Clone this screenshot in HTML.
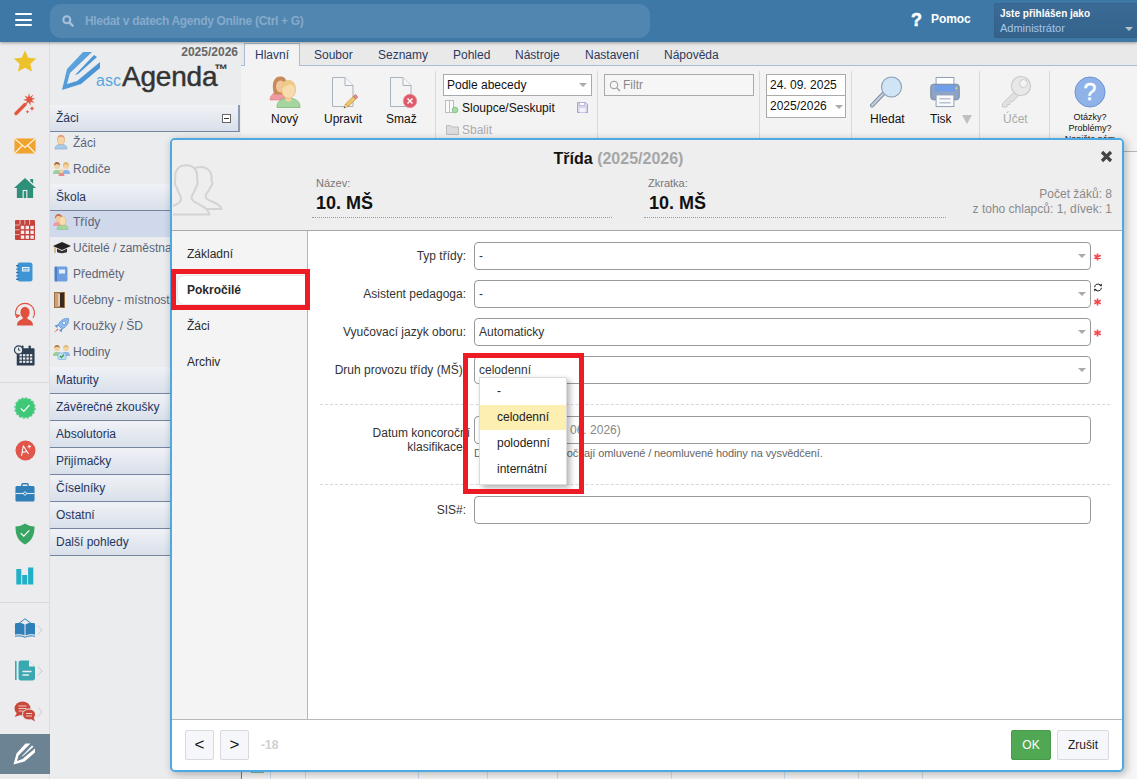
<!DOCTYPE html>
<html lang="cs">
<head>
<meta charset="utf-8">
<title>ascAgenda</title>
<style>
*{box-sizing:border-box;margin:0;padding:0}
html,body{width:1137px;height:779px;overflow:hidden;background:#fff;font-family:"Liberation Sans",sans-serif;font-size:12px;color:#222}
.abs{position:absolute}
#topbar{position:absolute;left:0;top:0;width:1137px;height:42px;background:#3e78a7;box-shadow:0 1px 3px rgba(0,0,0,.35);z-index:5}
#search{position:absolute;left:50px;top:4px;width:600px;height:34px;border-radius:11px;background:#5186b1}
#search span{position:absolute;left:35px;top:10px;font-size:12px;font-weight:bold;color:#86aaca;letter-spacing:-0.32px;white-space:nowrap}
#burger i{position:absolute;left:15px;width:17px;height:2px;background:#fff;border-radius:1px}
#help{position:absolute;left:911px;top:8px;color:#fff;font-weight:bold;white-space:nowrap}
#user{position:absolute;left:994px;top:3px;width:146px;height:35px;background:linear-gradient(#3a6b96,#34628b);border-radius:3px;box-shadow:inset 0 0 1px rgba(0,0,0,.35)}
#rail{position:absolute;left:0;top:42px;width:50px;height:737px;background:#ececee;border-right:1px solid #dcdcde}
#side{position:absolute;left:50px;top:42px;width:191px;height:737px;background:#ebecee}
.sh{position:absolute;left:0px;width:190px;height:27px;background:linear-gradient(#f0f2f6,#d9e0ea);border-bottom:1px solid #76859f;color:#25355f;font-size:12px;line-height:27px;padding-left:6px}
.si{position:absolute;left:0px;width:190px;height:26px;color:#5b6478;font-size:12px;line-height:23px;padding-left:23px;white-space:nowrap}
.si.sel{background:#d0d8ec}
#main{position:absolute;left:241px;top:42px;width:896px;height:737px;background:#f6f6f6}
#tabs{position:absolute;left:0;top:0;width:896px;height:24px;background:#e9e9e9;border-bottom:1px solid #a8bdd3}
.tab{position:absolute;top:1px;height:24px;line-height:25px;font-size:12px;color:#2b3a5e;white-space:nowrap}
#ribbon{position:absolute;left:0;top:24px;width:896px;height:86px;background:#f3f3f3;border-bottom:1px solid #b4b4b4}
.rb{position:absolute;font-size:12px;color:#111;white-space:nowrap}
.vsep{position:absolute;top:5px;width:1px;height:80px;background:#d9d9d9}
#dlg{position:absolute;left:170px;top:138px;width:954px;height:634px;border:2px solid #4ea9e2;border-radius:5px;background:#fff;z-index:10;box-shadow:2px 2px 9px rgba(0,0,0,.28);overflow:hidden}
#dh{position:absolute;left:0;top:0;width:949px;height:91px;background:#eeeeee;border-bottom:1px solid #a9a9a9}
#dn{position:absolute;left:0;top:91px;width:135px;height:488px;background:#f4f4f4;border-right:1px solid #b5b5b5}
#df{position:absolute;left:0;top:579px;width:949px;height:51px;background:#fff;border-top:1px solid #b9b9b9}
.nv{position:absolute;left:14px;font-size:12px;color:#2a2a2a}
.lb{position:absolute;width:200px;text-align:right;font-size:12px;color:#333;white-space:nowrap}
.sel2{position:absolute;left:301px;width:617px;height:28px;border:1px solid #999;border-radius:4px;background:#fff;font-size:12px;color:#333;line-height:26px;padding-left:4px}
.sel2:after{content:"";position:absolute;right:4px;top:11px;border:4px solid transparent;border-top:4px solid #aaa;border-bottom:0}
.ast{position:absolute;left:920px;font-size:17px;color:#f44;font-weight:bold;line-height:10px}
.dash{position:absolute;left:147px;width:790px;height:0;border-top:1px dashed #d8d8d8}
.red{position:absolute;border:5px solid #ed1c24;z-index:30}
.btn{position:absolute;height:30px;border-radius:2px;font-size:12px;text-align:center;line-height:29px}
</style>
</head>
<body>
<div id="topbar">
  <div id="burger"><i style="top:13px"></i><i style="top:19px"></i><i style="top:24px"></i></div>
  <div id="search">
    <svg class="abs" style="left:12px;top:11px" width="12" height="12" viewBox="0 0 12 12"><circle cx="4.800" cy="4.800" r="3.500" fill="none" stroke="#a5c0d8" stroke-width="2.100"/><path d="M7.600 7.600L10.600 10.600" stroke="#a5c0d8" stroke-width="2.500" stroke-linecap="round"/></svg>
    <span>Hledat v datech Agendy Online (Ctrl + G)</span>
  </div>
  <div id="help"><span style="font-size:18px;position:relative;top:2px;-webkit-text-stroke:.5px #fff">?</span><span style="font-size:12px;margin-left:9px;letter-spacing:-0.1px;position:relative;top:-1px">Pomoc</span></div>
  <div id="user">
    <div class="abs" style="left:6px;top:5px;font-size:10px;font-weight:bold;color:#fff;white-space:nowrap">Jste přihlášen jako</div>
    <div class="abs" style="left:6px;top:19px;font-size:11px;color:#a6c6e6;white-space:nowrap">Administrátor</div>
    <div class="abs" style="left:131px;top:24px;border:4px solid transparent;border-top:4px solid #b5c3d0;border-bottom:0"></div>
  </div>
</div>
<div id="rail"><!-- star -->
<svg class="abs" style="left:13px;top:8px" width="24" height="22" viewBox="0 0 24 22"><path d="M12 0.500L15.300 7.800L23.200 8.600L17.300 13.900L19 21.600L12 17.700L5 21.600L6.700 13.900L0.800 8.600L8.700 7.800Z" fill="#ecc12a"/></svg>
<!-- wand -->
<svg class="abs" style="left:13px;top:51px" width="24" height="23" viewBox="0 0 24 23"><path d="M3 20.500L12 11.500" stroke="#e25541" stroke-width="3.400" stroke-linecap="round"/><path d="M16 0l1 4 3.500-2.500-2 3.500 4 .5-3.700 1.600 2.700 3-3.800-1.300-.3 4-1.700-3.600-3 2.500 1.300-3.800-3.800-.8 3.700-1.400-2.400-3.200 3.500 1.800z" fill="#e25541"/><path d="M19 13l.8 1.700 1.700.8-1.700.8-.8 1.700-.8-1.700-1.700-.8 1.700-.8zM14.500 17l.6 1.200 1.200.6-1.200.6-.6 1.200-.6-1.200-1.200-.6 1.200-.6z" fill="#e25541"/></svg>
<!-- mail -->
<svg class="abs" style="left:14px;top:96px" width="22" height="16" viewBox="0 0 24 17" preserveAspectRatio="none"><rect x="0.500" y="0.500" width="23" height="16" fill="#f0a32d"/><path d="M0.500 0.500L12 10L23.500 0.500" fill="none" stroke="#fdf3df" stroke-width="1.300"/><path d="M0.500 16.500L9 8M23.500 16.500L15 8" stroke="#fdf3df" stroke-width="1.300"/></svg>
<!-- home -->
<svg class="abs" style="left:14px;top:135px" width="22" height="22" viewBox="0 0 23 23"><path d="M11.500 1L23 11.500H20V22H3V11.500H0Z" fill="#2e9079"/><path d="M17 2h3v5l-3-2.700z" fill="#2e9079"/><rect x="9" y="13.500" width="5" height="8.500" fill="#ececee"/><rect x="10.200" y="14.700" width="2.600" height="7.300" fill="#2e9079"/></svg>
<!-- grid calendar -->
<svg class="abs" style="left:15px;top:178px" width="20" height="20" viewBox="0 0 20 20"><rect width="20" height="20" rx="1" fill="#c4433d"/><g fill="#f7ebea"><rect x="5.8" y="5.8" width="3.400" height="3.400"/><rect x="5.8" y="10.6" width="3.400" height="3.400"/><rect x="5.8" y="15.4" width="3.400" height="3.400"/><rect x="10.6" y="5.8" width="3.400" height="3.400"/><rect x="10.6" y="10.6" width="3.400" height="3.400"/><rect x="10.6" y="15.4" width="3.400" height="3.400"/><rect x="15.4" y="5.8" width="3.400" height="3.400"/><rect x="15.4" y="10.6" width="3.400" height="3.400"/><rect x="15.4" y="15.4" width="3.400" height="3.400"/></g><g fill="#ecc5c2"><rect x="4.6" y="0" width=".9" height="4.600"/><rect x="0" y="4.6" width="4.600" height=".9"/><rect x="9.4" y="0" width=".9" height="4.600"/><rect x="0" y="9.4" width="4.600" height=".9"/><rect x="14.2" y="0" width=".9" height="4.600"/><rect x="0" y="14.2" width="4.600" height=".9"/></g></svg>
<!-- notebook -->
<svg class="abs" style="left:16px;top:220px" width="17" height="20" viewBox="0 0 17 20"><rect x="1.500" y="0.500" width="15" height="19" rx="2.500" fill="#3e95d6"/><rect x="6" y="5" width="7.500" height="4.500" fill="#e9f3fb"/><path d="M7 6.500h5.500M7 8h5.500" stroke="#3a8fd0" stroke-width=".7"/><g fill="#2c6fa8"><rect x="0" y="3" width="3" height="1.400" rx=".7"/><rect x="0" y="6.400" width="3" height="1.400" rx=".7"/><rect x="0" y="9.800" width="3" height="1.400" rx=".7"/><rect x="0" y="13.200" width="3" height="1.400" rx=".7"/><rect x="0" y="16.600" width="3" height="1.400" rx=".7"/></g></svg>
<!-- user refresh -->
<svg class="abs" style="left:14px;top:260px" width="22" height="24" viewBox="0 0 22 24"><path d="M3 16A9.500 9.500 0 1 1 19 16" fill="none" stroke="#e0503f" stroke-width="1.100"/><path d="M1.500 12l2 4 3-3z" fill="#e0503f"/><path d="M3 23.500c0-4 2.500-5.500 5.500-6.500v-1.500h5V17c3 1 5.500 2.500 5.500 6.500z" fill="#e0503f"/><ellipse cx="11" cy="10.500" rx="4.600" ry="5.800" fill="#e0503f"/></svg>
<!-- calendar clock -->
<svg class="abs" style="left:14px;top:303px" width="21" height="21" viewBox="0 0 23 23"><rect x="3" y="3.500" width="19.500" height="19" rx="1" fill="#2c3e50"/><rect x="8" y="0.500" width="2.400" height="5" rx="1" fill="#2c3e50"/><rect x="16" y="0.500" width="2.400" height="5" rx="1" fill="#2c3e50"/><g fill="#ececee"><rect x="6" y="10" width="2.600" height="2.400"/><rect x="9.800" y="10" width="2.600" height="2.400"/><rect x="13.600" y="10" width="2.600" height="2.400"/><rect x="17.400" y="10" width="2.600" height="2.400"/><rect x="6" y="13.600" width="2.600" height="2.400"/><rect x="9.800" y="13.600" width="2.600" height="2.400"/><rect x="13.600" y="13.600" width="2.600" height="2.400"/><rect x="17.400" y="13.600" width="2.600" height="2.400"/><rect x="6" y="17.200" width="2.600" height="2.400"/><rect x="9.800" y="17.200" width="2.600" height="2.400"/><rect x="13.600" y="17.200" width="2.600" height="2.400"/><rect x="17.400" y="17.200" width="2.600" height="2.400"/></g><circle cx="5" cy="5.500" r="4.500" fill="#ececee" stroke="#2c3e50" stroke-width="1.200"/><path d="M5 3v2.700h2" stroke="#2c3e50" stroke-width="1" fill="none"/></svg>
<div class="abs" style="left:0;top:340px;width:49px;height:1px;background:#d8d8da"></div>
<!-- check badge -->
<svg class="abs" style="left:14px;top:355px" width="22" height="22" viewBox="0 0 21 21"><circle cx="10.500" cy="10.500" r="9.300" fill="#3fc878"/><circle cx="10.500" cy="10.500" r="9.700" fill="none" stroke="#3fc878" stroke-width="1" stroke-dasharray="2.200 1.600"/><path d="M6.500 10.800l2.800 2.900L14.800 7.800" stroke="#fff" stroke-width="1.200" fill="none"/></svg>
<!-- A+ -->
<svg class="abs" style="left:15px;top:398px" width="21" height="21" viewBox="0 0 21 21"><circle cx="10.500" cy="10.500" r="10" fill="#e0564a"/><g transform="rotate(-12 10.500 10.500)"><path d="M5.500 15L9.300 5.500L12.800 14.500M6.500 11.800h5.500" stroke="#fff" stroke-width="1" fill="none" stroke-linejoin="round"/><path d="M13.200 7.500h3.600M15 5.700v3.600" stroke="#fff" stroke-width="1"/></g></svg>
<!-- briefcase -->
<svg class="abs" style="left:15px;top:441px" width="20" height="19" viewBox="0 0 22 19" preserveAspectRatio="none"><path d="M7.500 3.500V1.800c0-.6.400-1 1-1h5c.6 0 1 .4 1 1v1.700" fill="none" stroke="#2f7fb8" stroke-width="1.500"/><rect x="0.500" y="3" width="21" height="15.500" rx="1.500" fill="#2f7fb8"/><path d="M0.500 10.500h21" stroke="#dfeaf4" stroke-width="1.100"/><circle cx="11" cy="10.500" r="1.600" fill="#2f7fb8" stroke="#dfeaf4" stroke-width="1"/></svg>
<!-- shield -->
<svg class="abs" style="left:15px;top:481px" width="20" height="22" viewBox="0 0 21 23"><path d="M10.500 0.500C7.500 2.500 4 3.500 0.500 3.500c0 9 2.500 15 10 19 7.500-4 10-10 10-19-3.500 0-7-1-10-3z" fill="#38a565"/><path d="M6 10.500l3.200 3.300L15 7.600" stroke="#fff" stroke-width="1.200" fill="none"/></svg>
<!-- bar chart -->
<svg class="abs" style="left:15px;top:524px" width="19" height="19" viewBox="0 0 19 19"><rect x="1.300" y="3" width="5" height="15.500" fill="#22b0c7"/><rect x="7.200" y="9" width="5" height="9.500" fill="#22b0c7"/><rect x="13.100" y="1.500" width="5.200" height="17" fill="#22b0c7"/></svg>
<div class="abs" style="left:0;top:560px;width:49px;height:1px;background:#d8d8da"></div>
<!-- open book -->
<svg class="abs" style="left:14px;top:576px" width="22" height="20" viewBox="0 0 22 20"><path d="M0.800 8.500L11 0.800L21.200 8.500" fill="none" stroke="#2f7fb8" stroke-width="1"/><path d="M1 5.500c3-.8 7-.5 9.500 1v11c-2.500-1.300-6.500-1.600-9.500-.8zM21 5.500c-3-.8-7-.5-9.500 1v11c2.500-1.300 6.500-1.600 9.500-.8z" fill="#2f7fb8"/><path d="M1 18.300c3-.8 7-.5 10 1 3-1.500 7-1.800 10-1" stroke="#2f7fb8" stroke-width="1" fill="none"/></svg>
<svg class="abs" style="left:37px;top:583px" width="6" height="10" viewBox="0 0 6 10"><path d="M1 0.500L5 5L1 9.500" fill="none" stroke="#c9c9cb" stroke-width="1"/></svg>
<!-- doc -->
<svg class="abs" style="left:15px;top:618px" width="21" height="21" viewBox="0 0 21 21"><path d="M0.800 1.500v18" stroke="#3aa8b0" stroke-width="1.600" stroke-linecap="round"/><path d="M6 0.500h8l6 6V18c0 1.400-1 2.500-2.500 2.500H6c-1.500 0-2.500-1.100-2.500-2.500V3C3.500 1.600 4.500 0.500 6 0.500z" fill="#3aa8b0"/><path d="M14 0.500v6h6z" fill="#ececee"/><path d="M8 11.500h8M8 15h5.500" stroke="#ececee" stroke-width="1.500" stroke-linecap="round"/></svg>
<svg class="abs" style="left:37px;top:624px" width="6" height="10" viewBox="0 0 6 10"><path d="M1 0.500L5 5L1 9.500" fill="none" stroke="#c9c9cb" stroke-width="1"/></svg>
<!-- chat -->
<svg class="abs" style="left:14px;top:659px" width="22" height="21" viewBox="0 0 22 21"><ellipse cx="8.500" cy="7.500" rx="8" ry="7" fill="#c9483c"/><path d="M3 12l-2.500 4 6-2z" fill="#c9483c"/><path d="M4.500 5h8M4.500 7.500h8M4.500 10h5" stroke="#f0c9c4" stroke-width="1"/><ellipse cx="15" cy="13.500" rx="6.500" ry="5.500" fill="#c9483c" stroke="#ececee" stroke-width="1"/><path d="M17 18l4 2.500-1.500-4.500z" fill="#c9483c"/><path d="M12 12.500h6M12 15h6" stroke="#f0c9c4" stroke-width="1"/></svg>
<svg class="abs" style="left:37px;top:665px" width="6" height="10" viewBox="0 0 6 10"><path d="M1 0.500L5 5L1 9.500" fill="none" stroke="#c9c9cb" stroke-width="1"/></svg>
<!-- pen block -->
<div class="abs" style="left:0;top:692px;width:50px;height:40px;background:#6b8392"></div>
<svg class="abs" style="left:13px;top:701px" width="24" height="22" viewBox="0 0 24 22"><path d="M12.500 0.500L17.500 0.500L5.500 12.500L4 18L9.500 16L22 5.500L22 9.500L11.500 18.500L0.500 21.500L3.500 10.500Z" fill="#fff"/><path d="M19 2.500L20.500 3.800L10 13L8.500 13.500Z" fill="#fff"/></svg>
</div>
<div id="side"><div class="abs" style="left:118px;top:3px;width:70px;text-align:right;font-size:12px;font-weight:bold;color:#666">2025/2026</div>
<svg class="abs" style="left:11px;top:9px" width="42" height="40" viewBox="0 0 42 40"><defs><linearGradient id="pg" x1="0" y1="0" x2="1" y2="1"><stop offset="0" stop-color="#6ab0e4"/><stop offset="1" stop-color="#3a86cc"/></linearGradient></defs><path d="M22 1L31 1L9 22L6 33L16 30L39 11L39 17L20 33L1 39L6 18Z" fill="url(#pg)"/><path d="M33 4L36 6L17 23L14 24Z" fill="#4a96d6"/></svg>
<div class="abs" style="left:46px;top:30px;font-size:16px;color:#5aa5dc;letter-spacing:0px">asc</div>
<div class="abs" style="left:72px;top:18px;font-size:28px;color:#343434;letter-spacing:-0.2px;line-height:34px;-webkit-text-stroke:0.45px #343434">Agenda</div>
<div class="abs" style="left:164px;top:20px;font-size:14px;font-weight:bold;color:#343434;line-height:14px">™</div>
<div class="sh" style="top:63px;border-right:2px solid #8f9bb3">Žáci<span class="abs" style="left:172px;top:9px;width:9px;height:9px;border:1px solid #666;background:#fff"><i class="abs" style="left:1px;top:3px;width:5px;height:1px;background:#333"></i></span></div>
<div class="si" style="top:90px">Žáci</div>
<div class="si" style="top:116px">Rodiče</div>
<div class="sh" style="top:142px">Škola</div>
<div class="si sel" style="top:169px">Třídy</div>
<div class="si" style="top:195px">Učitelé / zaměstnanci</div>
<div class="si" style="top:221px">Předměty</div>
<div class="si" style="top:247px">Učebny - místnosti</div>
<div class="si" style="top:273px">Kroužky / ŠD</div>
<div class="si" style="top:299px">Hodiny</div>
<div class="sh" style="top:325px">Maturity</div>
<div class="sh" style="top:352px">Závěrečné zkoušky</div>
<div class="sh" style="top:379px">Absolutoria</div>
<div class="sh" style="top:406px">Přijímačky</div>
<div class="sh" style="top:433px">Číselníky</div>
<div class="sh" style="top:460px">Ostatní</div>
<div class="sh" style="top:487px">Další pohledy</div>
<!-- item icons -->
<svg class="abs" style="left:4px;top:92px" width="14" height="16" viewBox="0 0 14 16"><path d="M1 15c0-3 2-4 4-4.500h4c2 .5 4 1.500 4 4.500z" fill="#a9cbea" stroke="#7fa8cf" stroke-width=".6"/><ellipse cx="7" cy="6" rx="3.600" ry="4.600" fill="#f6d6a8" stroke="#d9a86c" stroke-width=".6"/><path d="M3.300 5c0-3 2-4.300 3.700-4.300S10.700 2 10.700 5c-1-1.500-2-2-3.700-2S4.300 3.500 3.300 5z" fill="#e9a07a"/></svg>
<svg class="abs" style="left:3px;top:119px" width="17" height="15" viewBox="0 0 17 15"><path d="M0 13c0-3 1-4 3-4h2c2 0 3 1 3 4z" fill="#9ccf9a"/><circle cx="4" cy="5" r="3" fill="#f3d2a2"/><path d="M1 4.500C1 2 2.500 1 4 1s3 1 3 3.500C6 3.500 5 3 4 3S2 3.500 1 4.500z" fill="#a0673a"/><path d="M9 13c0-3 1-4 3-4h2c2 0 3 1 3 4z" fill="#8fb5e6"/><circle cx="13" cy="5" r="3" fill="#f3d2a2"/><path d="M10 6c-.5-3 1-5 3-5s3.500 2 3 5c-.5-2-1.500-2.500-3-2.500S10.500 4 10 6z" fill="#e3b46a"/><path d="M5.500 15c0-2 1-3 2-3h2c1 0 2 1 2 3z" fill="#e98b8b"/><circle cx="8.500" cy="10" r="2" fill="#f3d2a2"/></svg>
<svg class="abs" style="left:3px;top:171px" width="18" height="17" viewBox="0 0 18 17"><path d="M0 13c0-2.500 1.500-3.500 3.500-4h3C8.500 9.500 10 10.500 10 13z" fill="#ef9aa0"/><ellipse cx="5.500" cy="5.500" rx="3.300" ry="4" fill="#f3c9a0"/><path d="M2 6C1.500 2.500 3.500 1 5.500 1s3.800 1 3.500 4C8 3.500 6.500 3 5.500 3S3 3.500 2 6z" fill="#c7744a"/><path d="M4 16.500c0-3 1.500-4 3.500-4.500h4c2 .5 3.500 1.500 3.500 4.500z" fill="#a5d6a0" stroke="#7db87a" stroke-width=".5"/><ellipse cx="9.500" cy="8" rx="3.500" ry="4.300" fill="#f8dcae" stroke="#dcae70" stroke-width=".5"/></svg>
<svg class="abs" style="left:3px;top:200px" width="18" height="13" viewBox="0 0 18 13"><path d="M9 0L18 4L9 8L0 4Z" fill="#222"/><path d="M4 6.500V10c1.500 1.500 8.500 1.500 10 0V6.500L9 9Z" fill="#333"/><path d="M2 5v6" stroke="#c98b2b" stroke-width="1"/></svg>
<svg class="abs" style="left:4px;top:224px" width="14" height="16" viewBox="0 0 14 16"><rect x="1" y="0.500" width="12.500" height="15" rx="1.500" fill="#6f9fe0"/><rect x="0.500" y="0.500" width="2.500" height="15" rx="1" fill="#4c7fc6"/><rect x="5" y="3.500" width="6" height="4" fill="#e8f0fc"/></svg>
<svg class="abs" style="left:4px;top:250px" width="14" height="16" viewBox="0 0 14 16"><rect x="0.500" y="0.500" width="10" height="15" fill="#caa27a" stroke="#9c7248" stroke-width="1"/><path d="M4 1.500L10 0.500V15.500L4 14.500Z" fill="#3a2a20"/><rect x="4" y="1.500" width="2" height="13" fill="#e6c9a5"/></svg>
<svg class="abs" style="left:3px;top:275px" width="17" height="17" viewBox="0 0 17 17"><path d="M15.500 1.500c-4.500-.5-8 1.500-10.500 6.500l4 4c5-2.500 7-6 6.500-10.500z" fill="#8db9ec" stroke="#5f94d6" stroke-width=".8"/><circle cx="11" cy="6" r="1.700" fill="#eaf3fc" stroke="#5f94d6" stroke-width=".7"/><path d="M5.500 7.500L1.500 8.500 4 11zM9.500 11.500l-1 4L6 13z" fill="#5f94d6"/><path d="M4.500 11.500l-3.500 4.500 4.500-3.500z" fill="#e9604e"/></svg>
<svg class="abs" style="left:3px;top:302px" width="17" height="16" viewBox="0 0 17 16"><path d="M0 12c0-3 1-4 3-4h2c2 0 3 1 3 4z" fill="#9ccf9a"/><circle cx="4" cy="4.500" r="2.800" fill="#f3d2a2"/><path d="M1.200 4C1.200 2 2.500 1 4 1s2.800 1 2.800 3C6 3.200 5 3 4 3s-2 .2-2.800 1z" fill="#b5773f"/><path d="M9 12c0-3 1-4 3-4h2c2 0 3 1 3 4z" fill="#8fb5e6"/><circle cx="13" cy="4.500" r="2.800" fill="#f3d2a2"/><path d="M10.200 4c0-2 1.300-3 2.800-3s2.800 1 2.800 3c-.8-.8-1.800-1-2.800-1s-2 .2-2.800 1z" fill="#e3b46a"/><rect x="5" y="9" width="8" height="6.500" rx="1" fill="#bfe0f7" stroke="#6fa9d6" stroke-width=".6"/><path d="M7 12l1.500 1.500L11 10.500" stroke="#3c9a4b" stroke-width="1.200" fill="none"/></svg>
</div>
<div id="main">
  <div id="tabs"><div class="abs" style="left:3px;top:1px;width:56px;height:24px;background:#f3f3f3;border:1px solid #a8bdd3;border-bottom:0"></div>
<div class="tab" style="left:14px">Hlavní</div>
<div class="tab" style="left:73px">Soubor</div>
<div class="tab" style="left:137px">Seznamy</div>
<div class="tab" style="left:212px">Pohled</div>
<div class="tab" style="left:274px">Nástroje</div>
<div class="tab" style="left:344px">Nastavení</div>
<div class="tab" style="left:423px">Nápověda</div>
</div>
  <div id="ribbon"><!-- Novy -->
<svg class="abs" style="left:28px;top:9px" width="34" height="34" viewBox="0 0 34 34"><path d="M1 25c0-5 3-6.500 7-8h6c4 1.500 7 3 7 8z" fill="#ef9aa0" stroke="#df7f88" stroke-width=".6"/><path d="M4 14C3 6 6.500 1.500 11 1.500S18 4 17.500 10V19.500H5.500C4.500 17.500 4.200 16 4 14z" fill="#c98a5a"/><ellipse cx="11.500" cy="11.500" rx="4.500" ry="6" fill="#f1c79b"/><path d="M8 32.500c0-6 3-7.500 7.500-9h8c4.500 1.500 7.500 3 7.500 9z" fill="#a5d6a0" stroke="#7db87a" stroke-width=".8"/><path d="M16.500 21h6v4.500c-1.500 1.500-4.500 1.500-6 0z" fill="#f3d29c"/><ellipse cx="19.500" cy="14.500" rx="7" ry="9" fill="#f8dcae" stroke="#e2b877" stroke-width=".8"/><path d="M12.600 14C12 8.500 15 5.300 19.500 5.300S27 8.500 26.400 14C25.500 11.500 23.500 10 21 9.500C18 10.500 14.500 11.500 12.600 14z" fill="#efc987"/></svg>
<div class="rb" style="left:30px;top:46px">Nový</div>
<!-- Upravit -->
<svg class="abs" style="left:90px;top:11px" width="30" height="34" viewBox="0 0 30 34"><path d="M1.500 0.500H14L22 8.500V29.500H1.500Z" fill="#f4f4f4" stroke="#a9b3c0" stroke-width="1"/><path d="M14 0.500V8.500H22" fill="#f6f6f6" stroke="#a9b3c0" stroke-width="1"/><g transform="translate(14.500,29.500) rotate(-44) scale(.84)"><rect x="2" y="-2.200" width="13" height="4.400" fill="#f1c56a" stroke="#b8892f" stroke-width=".7"/><rect x="15" y="-2.200" width="3.500" height="4.400" rx="1" fill="#e58c8c" stroke="#b85a5a" stroke-width=".7"/><path d="M2 -2.200L-2.500 0L2 2.200Z" fill="#f3dcb5" stroke="#b8892f" stroke-width=".6"/><path d="M-2.500 0L-.8 -.9V.9Z" fill="#333"/></g></svg>
<div class="rb" style="left:83px;top:46px">Upravit</div>
<!-- Smaz -->
<svg class="abs" style="left:148px;top:11px" width="30" height="34" viewBox="0 0 30 34"><path d="M1.500 0.500H14L22 8.500V29.500H1.500Z" fill="#f4f4f4" stroke="#a9b3c0" stroke-width="1"/><path d="M14 0.500V8.500H22" fill="#f6f6f6" stroke="#a9b3c0" stroke-width="1"/><circle cx="21" cy="24" r="6.700" fill="#e05a69" stroke="#e58e98" stroke-width=".9"/><path d="M18.500 21.500l5 5M23.500 21.500l-5 5" stroke="#fff" stroke-width="1.500"/></svg>
<div class="rb" style="left:145px;top:46px">Smaž</div>
<div class="vsep" style="left:194px"></div>
<div class="abs" style="left:202px;top:8px;width:149px;height:22px;background:#fff;border:1px solid #aaa;font-size:12px;color:#111;line-height:20px;padding-left:3px">Podle abecedy<i class="abs" style="right:4px;top:8px;border:4px solid transparent;border-top:4px solid #aaa;border-bottom:0"></i></div>
<svg class="abs" style="left:204px;top:34px" width="14" height="14" viewBox="0 0 14 14"><rect x="0.500" y="0.500" width="4" height="12" fill="#fafafa" stroke="#bdbdbd"/><rect x="4.500" y="0.500" width="4" height="12" fill="#fafafa" stroke="#bdbdbd"/><circle cx="10" cy="10" r="2.800" fill="#a9dba9" stroke="#74bb74" stroke-width=".8"/></svg>
<div class="rb" style="left:221px;top:35px">Sloupce/Seskupit</div>
<svg class="abs" style="left:336px;top:36px" width="11" height="11" viewBox="0 0 11 11"><path d="M0.500 0.500h8l2 2v8h-10z" fill="#d9d4ee" stroke="#a9a1cf" stroke-width="1"/><rect x="2.500" y="0.500" width="5" height="3" fill="#fff" stroke="#a9a1cf" stroke-width=".6"/><rect x="2.500" y="6" width="6" height="4.500" fill="#f3f1fa"/></svg>
<svg class="abs" style="left:205px;top:58px" width="13" height="11" viewBox="0 0 13 11"><path d="M0.500 1.500h4l1 1.500h7v7.500h-12z" fill="#dcdcdc" stroke="#bdbdbd" stroke-width="1"/></svg>
<div class="rb" style="left:221px;top:57px;color:#aaa">Sbalit</div>
<div class="vsep" style="left:356px"></div>
<div class="abs" style="left:363px;top:8px;width:150px;height:22px;background:#f6f6f6;border:1px solid #aaa;font-size:12px;color:#888;line-height:20px;padding-left:18px">Filtr<svg class="abs" style="left:4px;top:5px" width="12" height="12" viewBox="0 0 12 12"><circle cx="5" cy="5" r="3.800" fill="none" stroke="#999" stroke-width="1"/><path d="M7.800 7.800L11 11" stroke="#999" stroke-width="1.200"/></svg></div>
<div class="vsep" style="left:518px"></div>
<div class="abs" style="left:525px;top:8px;width:80px;height:44px;background:#fff;border:1px solid #aaa"></div>
<div class="abs" style="left:525px;top:29px;width:80px;height:1px;background:#aaa"></div>
<div class="rb" style="left:529px;top:12px">24. 09. 2025</div>
<div class="rb" style="left:529px;top:33px">2025/2026</div>
<i class="abs" style="left:594px;top:39px;border:4px solid transparent;border-top:4px solid #aaa;border-bottom:0"></i>
<div class="vsep" style="left:610px"></div>
<!-- Hledat -->
<svg class="abs" style="left:629px;top:9px" width="34" height="34" viewBox="0 0 34 34"><path d="M13.500 18.500L2 30.500" stroke="#7f8ea3" stroke-width="4" stroke-linecap="round"/><path d="M13.500 18.500L2 30.500" stroke="#c5cfdb" stroke-width="2" stroke-linecap="round"/><circle cx="21.500" cy="12" r="10" fill="#cfe4f5" stroke="#8a9db5" stroke-width="1.100"/></svg>
<div class="rb" style="left:629px;top:46px">Hledat</div>
<!-- Tisk -->
<svg class="abs" style="left:689px;top:10px" width="30" height="33" viewBox="0 0 32 34" preserveAspectRatio="none"><rect x="6.500" y="1.500" width="19" height="10" fill="#fff" stroke="#8a9db5" stroke-width="1"/><rect x="0.800" y="8.500" width="30.400" height="16" rx="3" fill="#8fa3c4" stroke="#71859f" stroke-width="1"/><rect x="5" y="9.500" width="22" height="6.500" fill="#6f9fe8"/><circle cx="28" cy="12.500" r="1" fill="#f4d35a"/><rect x="6.500" y="19.500" width="19" height="12" fill="#fafafa" stroke="#8a9db5" stroke-width="1"/><path d="M10 23.500h12M10 27.500h12" stroke="#b8c2d0" stroke-width="1.500"/></svg>
<div class="rb" style="left:689px;top:46px">Tisk</div>
<div class="abs" style="left:721px;top:49px;border:5px solid transparent;border-top:9px solid #c0c0c0;border-bottom:0"></div>
<div class="vsep" style="left:738px"></div>
<!-- Ucet -->
<svg class="abs" style="left:758px;top:9px" width="34" height="34" viewBox="0 0 34 34"><g opacity=".55"><path d="M16 16L3.500 28.500L3.500 32L8 32L8 29.500L11 29.500L11 26.500L14 26.500L19 21Z" fill="#d4d4d4" stroke="#aaa" stroke-width="1"/><circle cx="22" cy="11" r="9.500" fill="#e0e0e0" stroke="#aaa" stroke-width="1.200"/><circle cx="24.500" cy="8.500" r="4" fill="#f3f3f3" stroke="#aaa" stroke-width="1"/></g></svg>
<div class="rb" style="left:762px;top:46px;color:#aaa">Účet</div>
<div class="vsep" style="left:808px"></div>
<!-- Help -->
<svg class="abs" style="left:833px;top:10px" width="32" height="32" viewBox="0 0 32 32"><circle cx="16" cy="16" r="15" fill="#8fb3e8" stroke="#6b93d1" stroke-width="1"/><text x="16" y="24" font-family="Liberation Sans, sans-serif" font-size="23" font-weight="normal" stroke="#fff" stroke-width=".5" fill="#fff" text-anchor="middle">?</text></svg>
<div class="abs" style="left:809px;top:46px;width:80px;text-align:center;font-size:9px;line-height:11px;color:#111">Otázky?<br>Problémy?<br>Napište nám</div>
</div>
  <div class="abs" style="left:0;top:108px;width:1px;height:629px;background:#777"></div>
<div class="abs" style="left:29px;top:108px;width:1px;height:629px;background:#c9dcee"></div>
<div class="abs" style="left:64px;top:108px;width:1px;height:629px;background:#c9dcee"></div>
<div class="abs" style="left:177px;top:108px;width:1px;height:629px;background:#c9dcee"></div>
<div class="abs" style="left:246px;top:108px;width:1px;height:629px;background:#c9dcee"></div>
<div class="abs" style="left:316px;top:108px;width:1px;height:629px;background:#c9dcee"></div>
<div class="abs" style="left:430px;top:108px;width:1px;height:629px;background:#c9dcee"></div>
<div class="abs" style="left:543px;top:108px;width:1px;height:629px;background:#c9dcee"></div>
<div class="abs" style="left:617px;top:108px;width:1px;height:629px;background:#c9dcee"></div>
<div class="abs" style="left:681px;top:108px;width:1px;height:629px;background:#c9dcee"></div>
<div class="abs" style="left:10px;top:728px;width:13px;height:3px;background:#7fbf9f"></div>

</div>
<div id="dlg"><div id="dw" class="abs" style="left:1px;top:0;width:949px;height:630px"><div class="abs" style="left:-1px;top:0;width:1px;height:90px;background:#eee"></div><div class="abs" style="left:-1px;top:90px;width:1px;height:1px;background:#a9a9a9"></div><div class="abs" style="left:-1px;top:91px;width:1px;height:488px;background:#f4f4f4"></div><div class="abs" style="left:-1px;top:579px;width:1px;height:1px;background:#b9b9b9"></div><div id="dh">
  <div class="abs" style="left:0;top:10px;width:891px;text-align:center;font-size:16px;font-weight:bold;color:#111;white-space:nowrap">Třída <span style="color:#a6a6a6">(2025/2026)</span></div>
  <svg class="abs" style="left:0;top:20px" width="56" height="60" viewBox="0 0 56 60"><g fill="#eeeeee" stroke="#d3d3d3" stroke-width="2" stroke-linejoin="round"><path d="M21 8.500C23 7.500 25 7 27.500 7C34 7 39.500 11 38.500 20C39.500 22 39.500 25 37.500 27C36 32 32.500 33 32.500 36.500C32.500 42 46 41 48.500 49L30 49"/><path d="M-3 47C3 45 8 43 8 39C8 35 5 33 3.500 27C1.500 25 1.500 21 2.500 19C1 10 6 5.300 13 5.300C20 5.300 25.500 10 24 19C25 21 25 25 23 27C22 32 18.500 34 18.500 38C18.500 44 34 44 36.500 54.500L-3 54.500"/></g></svg>
  <div class="abs" style="left:143px;top:37px;font-size:11px;color:#777">Název:</div>
  <div class="abs" style="left:143px;top:53px;font-size:18px;font-weight:bold;color:#111;white-space:nowrap">10. MŠ</div>
  <div class="abs" style="left:139px;top:77px;width:300px;border-top:1px dotted #999"></div>
  <div class="abs" style="left:475px;top:37px;font-size:11px;color:#777">Zkratka:</div>
  <div class="abs" style="left:476px;top:53px;font-size:18px;font-weight:bold;color:#111;white-space:nowrap">10. MŠ</div>
  <div class="abs" style="left:471px;top:77px;width:302px;border-top:1px dotted #999"></div>
  <div class="abs" style="left:739px;top:47px;width:200px;text-align:right;font-size:12px;color:#8a8a8a;line-height:14.500px;white-space:nowrap">Počet žáků: 8<br>z toho chlapců: 1, dívek: 1</div>
  <svg class="abs" style="left:927px;top:10px" width="13" height="13" viewBox="0 0 13 13"><path d="M2 2L11 11M11 2L2 11" stroke="#444" stroke-width="3.200"/></svg>
</div>
<div id="dn">
  <div class="nv" style="top:16px">Základní</div>
  <div class="abs" style="left:4px;top:44px;width:131px;height:30px;background:#fff;border-radius:7px 0 0 7px;border:1px solid #e6e6e6;border-right:0"></div>
  <div class="nv" style="top:52px;font-weight:bold">Pokročilé</div>
  <div class="nv" style="top:88px">Žáci</div>
  <div class="nv" style="top:124px">Archiv</div>
</div>
<div id="dc" class="abs" style="left:0;top:0;width:949px;height:630px">
  <div class="lb" style="left:93px;top:109px">Typ třídy:</div>
  <div class="sel2" style="top:102px">-</div>
  <svg class="abs" style="left:920px;top:113px" width="9" height="9" viewBox="0 0 9 9"><path d="M4.500 0.600V7.400M1.300 2.200L7.700 5.800M7.700 2.200L1.300 5.800" stroke="#f5484f" stroke-width="1.600" fill="none"/></svg>
  <div class="lb" style="left:93px;top:147px">Asistent pedagoga:</div>
  <div class="sel2" style="top:140px">-</div>
  <svg class="abs" style="left:920px;top:143px" width="10" height="9" viewBox="0 0 10 9"><path d="M1.600 4.200A3.400 3.200 0 0 1 7.600 2.200M8.400 4.800A3.400 3.200 0 0 1 2.400 6.800" fill="none" stroke="#222" stroke-width="1"/><path d="M6.200 2.900L9 3.200L8.600 0.600ZM3.800 6.100L1 5.800L1.400 8.400Z" fill="#222"/></svg>
  <svg class="abs" style="left:920px;top:158px" width="9" height="9" viewBox="0 0 9 9"><path d="M4.500 0.600V7.400M1.300 2.200L7.700 5.800M7.700 2.200L1.300 5.800" stroke="#f5484f" stroke-width="1.600" fill="none"/></svg>
  <div class="lb" style="left:93px;top:185px">Vyučovací jazyk oboru:</div>
  <div class="sel2" style="top:178px">Automaticky</div>
  <svg class="abs" style="left:920px;top:189px" width="9" height="9" viewBox="0 0 9 9"><path d="M4.500 0.600V7.400M1.300 2.200L7.700 5.800M7.700 2.200L1.300 5.800" stroke="#f5484f" stroke-width="1.600" fill="none"/></svg>
  <div class="lb" style="left:93px;top:223px">Druh provozu třídy (MŠ):</div>
  <div class="sel2" style="top:216px">celodenní</div>
  <div class="dash" style="top:264px"></div>
  <div class="lb" style="left:97px;top:286px;line-height:14px">Datum koncoroční</div><div class="lb" style="left:93px;top:300px;line-height:14px">klasifikace:</div>
  <div class="sel2 noarr" style="top:276px"></div><div class="abs" style="left:373px;top:283px;font-size:12px;color:#888;white-space:nowrap">(30. 06. 2026)</div>
  <style>#dc .sel2.noarr:after{display:none}</style>
  <div class="abs" style="left:301px;top:307px;font-size:11px;color:#666;white-space:nowrap"><span style="letter-spacing:-0.18px">Do tohoto data se </span><span style="letter-spacing:-0.1px">počítají omluvené / neomluvené hodiny na vysvědčení.</span></div>
  <div class="dash" style="top:344px"></div>
  <div class="lb" style="left:93px;top:363px">SIS#:</div>
  <div class="sel2 noarr" style="top:356px"></div>
  <!-- dropdown -->
  <div class="abs" style="left:306px;top:237px;width:88px;height:108px;background:#fff;border:1px solid #dcdcdc;box-shadow:3px 3px 6px rgba(0,0,0,.3);z-index:20;font-size:12px;color:#222">
    <div class="abs" style="left:0;top:0;width:86px;height:26px;line-height:26px;padding-left:17px">-</div>
    <div class="abs" style="left:0;top:27px;width:86px;height:25px;line-height:25px;padding-left:17px;background:#fdeeb2">celodenní</div>
    <div class="abs" style="left:0;top:52px;width:86px;height:26px;line-height:27px;padding-left:17px">polodenní</div>
    <div class="abs" style="left:0;top:78px;width:86px;height:26px;line-height:27px;padding-left:17px">internátní</div>
  </div>
</div>
<div id="df">
  <div class="btn" style="left:12px;top:10px;width:29px;background:#f6f7fb;border:1px solid #d9d9de;font-size:17px;color:#111;line-height:28px">&lt;</div>
  <div class="btn" style="left:47px;top:10px;width:29px;background:#f6f7fb;border:1px solid #d9d9de;font-size:17px;color:#111;line-height:28px">&gt;</div>
  <div class="abs" style="left:88px;top:18px;font-size:12px;font-weight:bold;color:#d0d0d0">-18</div>
  <div class="btn" style="left:838px;top:10px;width:40px;background:#50a853;color:#fff;border:1px solid #479a4a">OK</div>
  <div class="btn" style="left:884px;top:10px;width:52px;background:#f6f7fb;border:1px solid #d9d9de;color:#222">Zrušit</div>
</div>
</div></div>
<div class="red" style="left:171px;top:269px;width:139px;height:41px"></div>
<div class="red" style="left:463px;top:353px;width:121px;height:141px"></div>

</body>
</html>
